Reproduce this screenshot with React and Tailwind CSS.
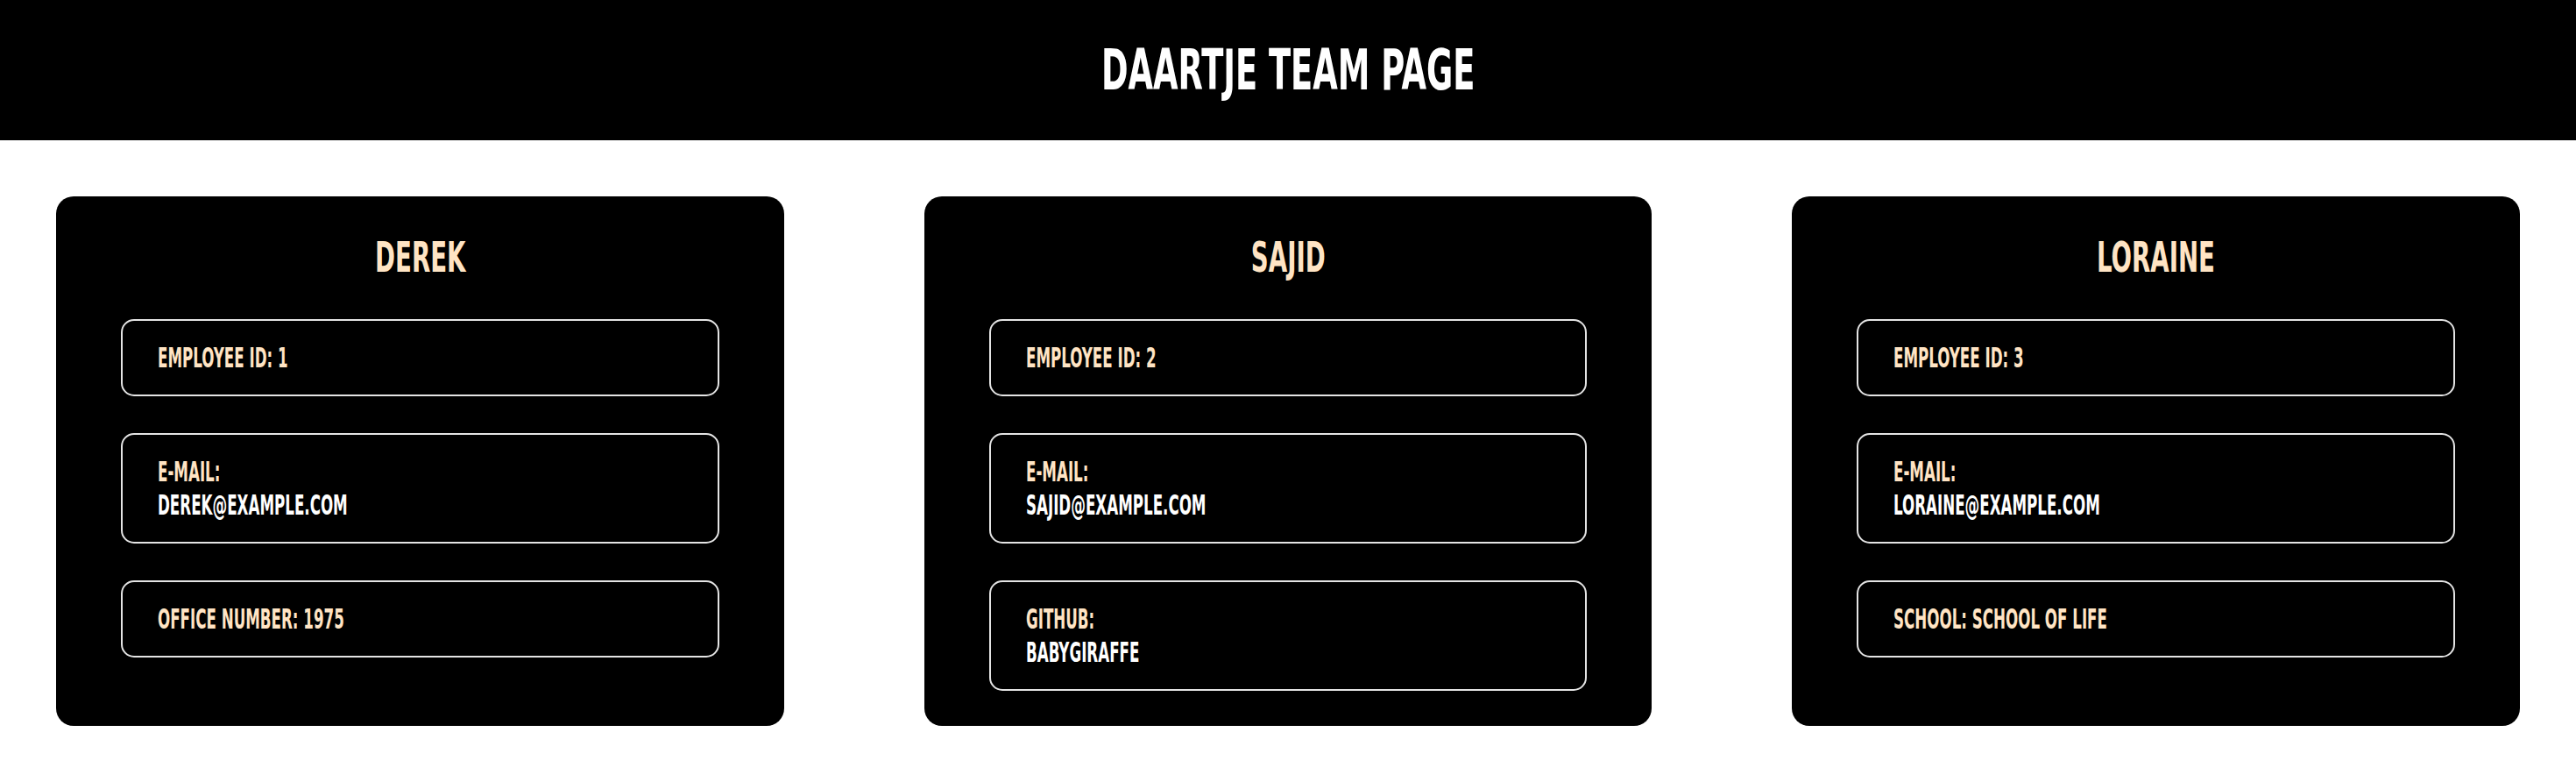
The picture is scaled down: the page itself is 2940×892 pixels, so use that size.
const employees = [
  {
    name: 'Derek',
    fields: [
      { label: 'Employee ID: 1' },
      { label: 'E-mail:', value: 'derek@example.com' },
      { label: 'Office number: 1975' },
    ],
  },
  {
    name: 'Sajid',
    fields: [
      { label: 'Employee ID: 2' },
      { label: 'E-mail:', value: 'sajid@example.com' },
      { label: 'GitHub:', value: 'babygiraffe' },
    ],
  },
  {
    name: 'Loraine',
    fields: [
      { label: 'Employee ID: 3' },
      { label: 'E-mail:', value: 'loraine@example.com' },
      { label: 'School: School of Life' },
    ],
  },
];

const Card = ({ employee }) => (
  <div className="flex-1 rounded-[20px] bg-black px-[74px] pt-10 pb-10 flex flex-col gap-[42px]">
    <h2 className="text-center text-[48px] leading-[58px] font-bold text-[#ffe4c4]">
      <span className="inline-block scale-x-[0.64]">{employee.name}</span>
    </h2>
    {employee.fields.map((field) => (
      <div
        key={field.label}
        className="rounded-[15px] border-2 border-[#e4e4e4] px-10 py-[23px] text-[32px] leading-[38px] font-bold"
      >
        <div className="text-[#ffe4c4]">
          <span className="inline-block origin-left scale-x-[0.58]">{field.label}</span>
        </div>
        {field.value && (
          <div className="text-white">
            <span className="inline-block origin-left scale-x-[0.58]">{field.value}</span>
          </div>
        )}
      </div>
    ))}
  </div>
);

export default function App() {
  return (
    <div
      className="min-h-screen bg-white uppercase"
      style={{ fontFamily: '"Liberation Sans Narrow", "DejaVu Sans Condensed", "Liberation Sans", sans-serif' }}
    >
      {/* Header */}
      <header className="h-[160px] bg-black flex items-center justify-center">
        <h1 className="text-[64px] leading-none font-bold text-white">
          <span className="inline-block scale-x-[0.64]">Daartje Team Page</span>
        </h1>
      </header>

      {/* Team cards */}
      <main className="flex gap-[160px] px-16 pt-16">
        {employees.map((employee) => (
          <Card key={employee.name} employee={employee} />
        ))}
      </main>
    </div>
  );
}
